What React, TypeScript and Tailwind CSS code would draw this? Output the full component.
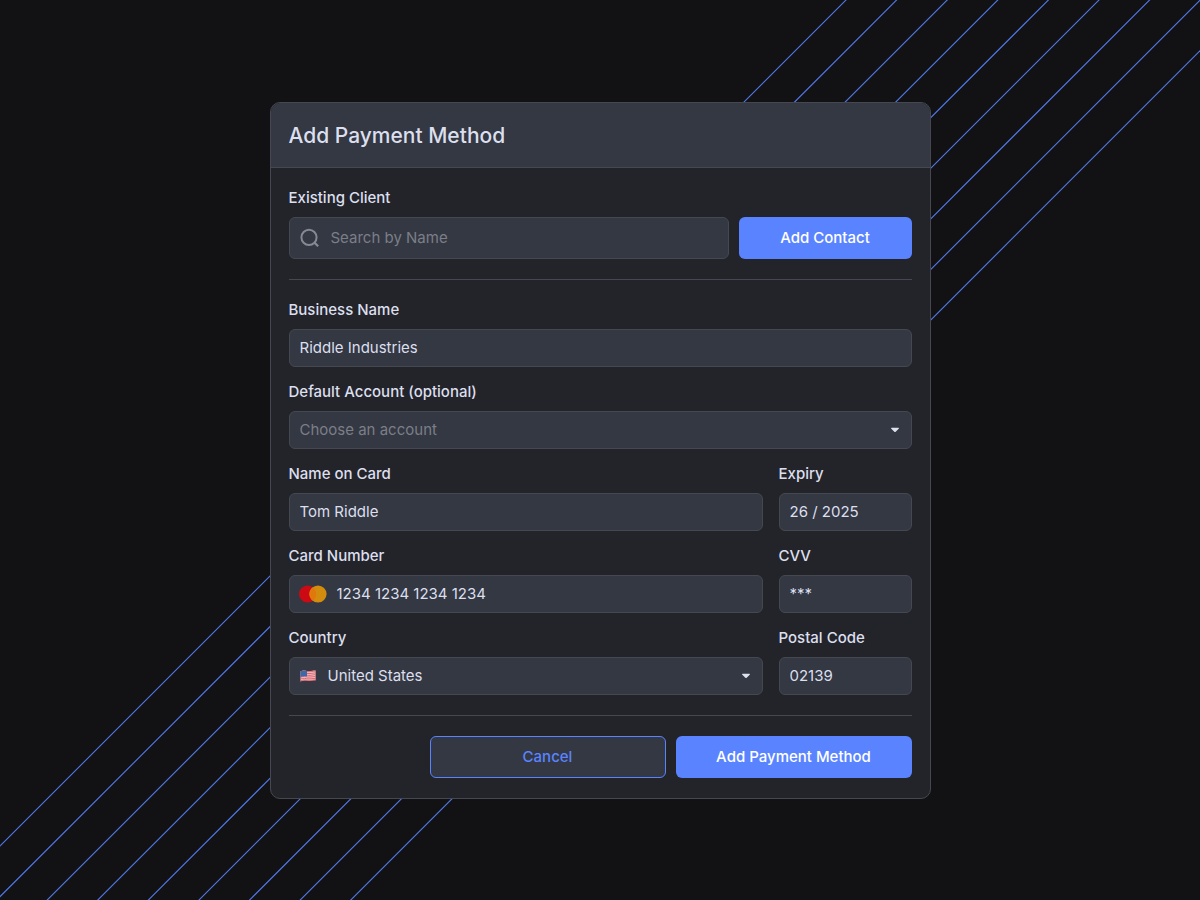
import React from 'react';

const boxClass =
  'w-full rounded-md border border-[#454850] bg-[#333842] text-[15px] leading-5 outline-none focus-within:border-[#5a84ff]';

// x + y of every diagonal in the background
const diagonals = [846, 896.6, 947.2, 997.8, 1048.4, 1099, 1149.6, 1200.2, 1250.8];

function Backdrop() {
  return (
    <svg
      className="absolute inset-0 h-full w-full"
      viewBox="0 0 1200 900"
      preserveAspectRatio="xMidYMid slice"
      fill="none"
      aria-hidden="true"
    >
      {diagonals.map((d) => (
        <path key={d} d={`M${d + 10} -10L${d - 910} 910`} stroke="#527aec" strokeWidth="1.1" />
      ))}
    </svg>
  );
}

function SearchIcon() {
  return (
    <svg className="h-5 w-5 shrink-0" viewBox="0 0 20 20" fill="none" aria-hidden="true">
      <circle cx="9" cy="9.3" r="7.6" stroke="#868892" strokeWidth="2" />
      <path d="M14.4 14.6L18.2 18.2" stroke="#868892" strokeWidth="2.2" />
    </svg>
  );
}

function MastercardIcon() {
  return (
    <svg className="h-[18px] w-7 shrink-0" viewBox="0 0 28 18" aria-hidden="true">
      <circle cx="8.6" cy="9" r="8.6" fill="#cc0a14" />
      <circle cx="19" cy="9" r="8.6" fill="#d48c0e" />
      <path d="M13.8 2.15a8.6 8.6 0 0 1 0 13.7a8.6 8.6 0 0 1 0-13.7z" fill="#e0780c" />
    </svg>
  );
}

function FlagIcon() {
  return (
    <svg className="h-3 w-4" viewBox="0 0 16 12" aria-hidden="true">
      <path d="M0.5 1.3C3.5 0 5.5 0.9 8 1.2C11 1.5 13 0.6 15.6 0.6V10.4C13 10.2 11 11.2 8 10.9C5.5 10.6 3.5 10.2 0.5 11.4Z" fill="#f0c9cd" />
      <g stroke="#df5a64" strokeWidth="0.9" fill="none">
        <path d="M0.5 1.8C3.5 0.5 5.5 1.4 8 1.7C11 2 13 1.1 15.6 1.1" />
        <path d="M0.5 3.6C3.5 2.3 5.5 3.2 8 3.5C11 3.8 13 2.9 15.6 2.9" />
        <path d="M0.5 5.4C3.5 4.1 5.5 5 8 5.3C11 5.6 13 4.7 15.6 4.7" />
        <path d="M0.5 7.2C3.5 5.9 5.5 6.8 8 7.1C11 7.4 13 6.5 15.6 6.5" />
        <path d="M0.5 9C3.5 7.7 5.5 8.6 8 8.9C11 9.2 13 8.3 15.6 8.3" />
        <path d="M0.5 10.8C3.5 9.5 5.5 10.1 8 10.4C11 10.7 13 9.9 15.6 9.9" />
      </g>
      <path d="M0.5 1.3C3.2 0.2 4.8 0.7 7 1.1V6.6C4.8 6.2 3.2 6 0.5 7.1Z" fill="#3f68a8" />
    </svg>
  );
}

function Caret() {
  return (
    <svg
      className="pointer-events-none absolute top-1/2 right-[13px] h-[5px] w-2 -translate-y-1/2"
      viewBox="0 0 8 5"
      aria-hidden="true"
    >
      <path d="M0.8 0H7.2C7.9 0 8.2 0.7 7.7 1.2L4.7 4.3C4.3 4.7 3.7 4.7 3.3 4.3L0.3 1.2C-0.2 0.7 0.1 0 0.8 0Z" fill="#dcdfee" />
    </svg>
  );
}

interface FieldProps {
  id: string;
  label: string;
  children: React.ReactNode;
}

function Field({ id, label, children }: FieldProps) {
  return (
    <div className="min-w-0">
      <label htmlFor={id} className="mb-[9px] block text-[15px] leading-5 font-medium text-[#dcdfee]">
        {label}
      </label>
      {children}
    </div>
  );
}

function TextField({ id, label, value }: { id: string; label: string; value: string }) {
  return (
    <Field id={id} label={label}>
      <input id={id} type="text" defaultValue={value} className={`${boxClass} block h-[38px] px-[10px] text-[#dcdfee]`} />
    </Field>
  );
}

export default function App() {
  return (
    <main className="relative flex min-h-screen items-center justify-center overflow-hidden bg-[#121214] p-4 font-['Inter',sans-serif]">
      <Backdrop />

      <form
        className="relative w-full max-w-[661px] overflow-hidden rounded-[10px] border border-[#454850] bg-[#232429]"
        onSubmit={(e) => e.preventDefault()}
      >
        {/* Header */}
        <header className="border-b border-[#454850] bg-[#333842] px-[18px] pt-[17px] pb-[15px]">
          <h1 className="text-[21px] leading-8 font-medium text-[#dcdfee]">Add Payment Method</h1>
        </header>

        <div className="px-[18px] py-5">
          {/* Existing client */}
          <Field id="client" label="Existing Client">
            <div className="flex gap-[10px]">
              <div className={`${boxClass} flex h-[42px] items-center gap-[11px] px-[10px] text-[#dcdfee]`}>
                <SearchIcon />
                <input
                  id="client"
                  type="search"
                  placeholder="Search by Name"
                  className="w-full min-w-0 outline-none placeholder:text-[#7c7e88]"
                />
              </div>
              <button
                type="button"
                className="h-[42px] w-[173px] shrink-0 rounded-md bg-[#5a84ff] text-[15px] leading-5 font-medium text-white"
              >
                Add Contact
              </button>
            </div>
          </Field>

          <hr className="my-5 border-[#454850]" />

          {/* Card details */}
          <div className="space-y-[15px]">
            <TextField id="business" label="Business Name" value="Riddle Industries" />

            <Field id="account" label="Default Account (optional)">
              <div className="relative">
                <select
                  id="account"
                  defaultValue=""
                  className={`${boxClass} block h-[38px] appearance-none pr-8 pl-[10px] text-[#7c7e88]`}
                >
                  <option value="">Choose an account</option>
                </select>
                <Caret />
              </div>
            </Field>

            <div className="grid grid-cols-[1fr_133px] gap-x-4 gap-y-[15px]">
              <TextField id="name" label="Name on Card" value="Tom Riddle" />
              <TextField id="expiry" label="Expiry" value="26 / 2025" />

              <Field id="number" label="Card Number">
                <div className={`${boxClass} flex h-[38px] items-center gap-[10px] px-[9px] text-[#dcdfee]`}>
                  <MastercardIcon />
                  <input
                    id="number"
                    type="text"
                    defaultValue="1234 1234 1234 1234"
                    className="w-full min-w-0 outline-none"
                  />
                </div>
              </Field>
              <TextField id="cvv" label="CVV" value="***" />

              <Field id="country" label="Country">
                <div className="relative">
                  <span className="pointer-events-none absolute top-1/2 left-[11px] -translate-y-1/2">
                    <FlagIcon />
                  </span>
                  <select
                    id="country"
                    defaultValue="us"
                    className={`${boxClass} block h-[38px] appearance-none pr-8 pl-[38px] text-[#dcdfee]`}
                  >
                    <option value="us">United States</option>
                  </select>
                  <Caret />
                </div>
              </Field>
              <TextField id="postal" label="Postal Code" value="02139" />
            </div>
          </div>

          <hr className="my-5 border-[#454850]" />

          {/* Actions */}
          <div className="flex justify-end gap-[10px]">
            <button
              type="button"
              className="h-[42px] w-[236px] rounded-md border border-[#5a84ff] bg-[#333842] text-[15px] leading-5 font-medium text-[#5a84ff]"
            >
              Cancel
            </button>
            <button
              type="submit"
              className="h-[42px] w-[236px] rounded-md bg-[#5a84ff] text-[15px] leading-5 font-medium text-white"
            >
              Add Payment Method
            </button>
          </div>
        </div>
      </form>
    </main>
  );
}
